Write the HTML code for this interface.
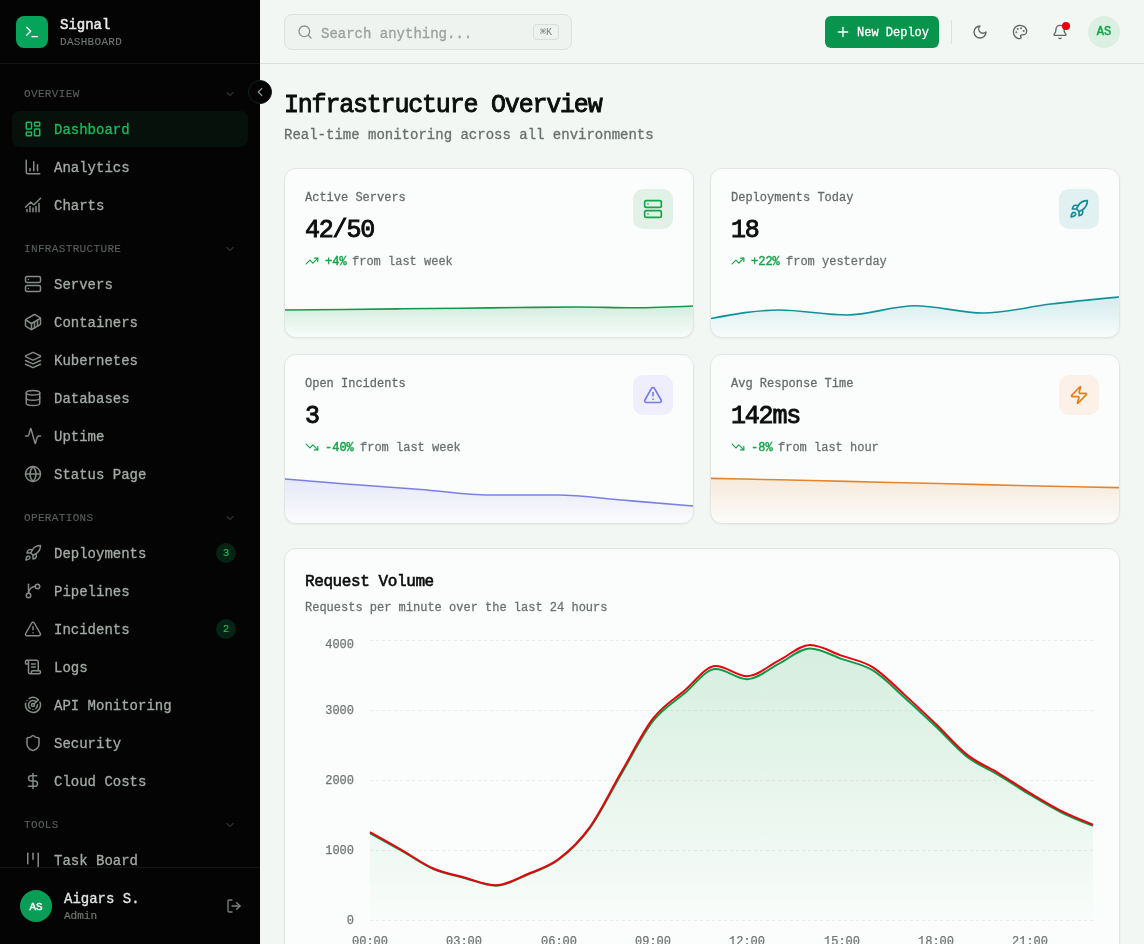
<!DOCTYPE html>
<html><head><meta charset="utf-8"><style>
html,body{margin:0;padding:0;width:1144px;height:944px;overflow:hidden;background:#f2f7f3;font-family:"Liberation Mono",monospace;}
.t{position:absolute;white-space:nowrap;will-change:transform;}
</style></head><body>
<div id="sb" style="position:absolute;left:0;top:0;width:260px;height:944px;background:#030403;overflow:hidden">
<div style="position:absolute;left:16px;top:16px;width:32px;height:32px;border-radius:8px;background:#06a35a"></div>
<svg style="position:absolute;left:24px;top:24px;" width="16" height="16" viewBox="0 0 24 24" fill="none" stroke="#ffffff" stroke-width="2" stroke-linecap="round" stroke-linejoin="round"><polyline points="4 17 10 11 4 5"/><line x1="12" x2="20" y1="19" y2="19"/></svg>
<div class="t" style="left:60px;top:18.18px;font-size:14px;line-height:14px;color:#e6e9e7;letter-spacing:0px;-webkit-text-stroke:0.50px #e6e9e7;">Signal</div>
<div class="t" style="left:60px;top:36.57px;font-size:11px;line-height:11px;color:#717773;letter-spacing:0.3px;-webkit-text-stroke:0.10px #717773;">DASHBOARD</div>
<div style="position:absolute;left:0;top:63px;width:260px;height:1px;background:#121713"></div>
<div class="t" style="left:24px;top:88.57px;font-size:11px;line-height:11px;color:#5a605c;letter-spacing:0.35px;-webkit-text-stroke:0.10px #5a605c;">OVERVIEW</div>
<svg style="position:absolute;left:224px;top:88px;" width="12" height="12" viewBox="0 0 24 24" fill="none" stroke="#4d524f" stroke-width="2" stroke-linecap="round" stroke-linejoin="round"><path d="m6 9 6 6 6-6"/></svg>
<div style="position:absolute;left:12px;top:111px;width:236px;height:36px;border-radius:8px;background:#07110b"></div>
<svg style="position:absolute;left:24px;top:120px;" width="18" height="18" viewBox="0 0 24 24" fill="none" stroke="#1db85c" stroke-width="2" stroke-linecap="round" stroke-linejoin="round"><rect width="7" height="9" x="3" y="3" rx="1"/><rect width="7" height="5" x="14" y="3" rx="1"/><rect width="7" height="9" x="14" y="12" rx="1"/><rect width="7" height="5" x="3" y="16" rx="1"/></svg>
<div class="t" style="left:54px;top:123.28px;font-size:14px;line-height:14px;color:#1db85c;letter-spacing:0px;-webkit-text-stroke:0.31px #1db85c;">Dashboard</div>
<svg style="position:absolute;left:24px;top:158px;" width="18" height="18" viewBox="0 0 24 24" fill="none" stroke="#848b86" stroke-width="2" stroke-linecap="round" stroke-linejoin="round"><path d="M3 3v16a2 2 0 0 0 2 2h16"/><path d="M18 17V9"/><path d="M13 17V5"/><path d="M8 17v-3"/></svg>
<div class="t" style="left:54px;top:161.28px;font-size:14px;line-height:14px;color:#a3aaa5;letter-spacing:0px;-webkit-text-stroke:0.31px #a3aaa5;">Analytics</div>
<svg style="position:absolute;left:24px;top:196px;" width="18" height="18" viewBox="0 0 24 24" fill="none" stroke="#848b86" stroke-width="2" stroke-linecap="round" stroke-linejoin="round"><path d="M12 16v5"/><path d="M16 14v7"/><path d="M20 10v11"/><path d="m22 3-8.646 8.646a.5.5 0 0 1-.708 0L9.354 8.354a.5.5 0 0 0-.707 0L2 15"/><path d="M4 18v3"/><path d="M8 14v7"/></svg>
<div class="t" style="left:54px;top:199.28px;font-size:14px;line-height:14px;color:#a3aaa5;letter-spacing:0px;-webkit-text-stroke:0.31px #a3aaa5;">Charts</div>
<div class="t" style="left:24px;top:243.57px;font-size:11px;line-height:11px;color:#5a605c;letter-spacing:0.35px;-webkit-text-stroke:0.10px #5a605c;">INFRASTRUCTURE</div>
<svg style="position:absolute;left:224px;top:243px;" width="12" height="12" viewBox="0 0 24 24" fill="none" stroke="#4d524f" stroke-width="2" stroke-linecap="round" stroke-linejoin="round"><path d="m6 9 6 6 6-6"/></svg>
<svg style="position:absolute;left:24px;top:275px;" width="18" height="18" viewBox="0 0 24 24" fill="none" stroke="#848b86" stroke-width="2" stroke-linecap="round" stroke-linejoin="round"><rect width="20" height="8" x="2" y="2" rx="2" ry="2"/><rect width="20" height="8" x="2" y="14" rx="2" ry="2"/><line x1="6" x2="6.01" y1="6" y2="6"/><line x1="6" x2="6.01" y1="18" y2="18"/></svg>
<div class="t" style="left:54px;top:278.28px;font-size:14px;line-height:14px;color:#a3aaa5;letter-spacing:0px;-webkit-text-stroke:0.31px #a3aaa5;">Servers</div>
<svg style="position:absolute;left:24px;top:313px;" width="18" height="18" viewBox="0 0 24 24" fill="none" stroke="#848b86" stroke-width="2" stroke-linecap="round" stroke-linejoin="round"><path d="M22 7.7c0-.6-.4-1.2-.8-1.5l-6.3-3.9a1.72 1.72 0 0 0-1.7 0l-10.3 6c-.5.2-.9.8-.9 1.4v6.6c0 .5.4 1.2.8 1.5l6.3 3.9a1.72 1.72 0 0 0 1.7 0l10.300-6c.5-.3.9-1 .9-1.5Z"/><path d="M10 21.9V14L2.1 9.1"/><path d="m10 14 11.9-6.9"/><path d="M14 19.8v-8.1"/><path d="M18 17.5V9.4"/></svg>
<div class="t" style="left:54px;top:316.28px;font-size:14px;line-height:14px;color:#a3aaa5;letter-spacing:0px;-webkit-text-stroke:0.31px #a3aaa5;">Containers</div>
<svg style="position:absolute;left:24px;top:351px;" width="18" height="18" viewBox="0 0 24 24" fill="none" stroke="#848b86" stroke-width="2" stroke-linecap="round" stroke-linejoin="round"><path d="m12.83 2.18a2 2 0 0 0-1.66 0L2.6 6.08a1 1 0 0 0 0 1.83l8.58 3.91a2 2 0 0 0 1.66 0l8.58-3.9a1 1 0 0 0 0-1.83Z"/><path d="m22 17.65-9.17 4.16a2 2 0 0 1-1.66 0L2 17.65"/><path d="m22 12.65-9.17 4.16a2 2 0 0 1-1.66 0L2 12.65"/></svg>
<div class="t" style="left:54px;top:354.28px;font-size:14px;line-height:14px;color:#a3aaa5;letter-spacing:0px;-webkit-text-stroke:0.31px #a3aaa5;">Kubernetes</div>
<svg style="position:absolute;left:24px;top:389px;" width="18" height="18" viewBox="0 0 24 24" fill="none" stroke="#848b86" stroke-width="2" stroke-linecap="round" stroke-linejoin="round"><ellipse cx="12" cy="5" rx="9" ry="3"/><path d="M3 5V19A9 3 0 0 0 21 19V5"/><path d="M3 12A9 3 0 0 0 21 12"/></svg>
<div class="t" style="left:54px;top:392.28px;font-size:14px;line-height:14px;color:#a3aaa5;letter-spacing:0px;-webkit-text-stroke:0.31px #a3aaa5;">Databases</div>
<svg style="position:absolute;left:24px;top:427px;" width="18" height="18" viewBox="0 0 24 24" fill="none" stroke="#848b86" stroke-width="2" stroke-linecap="round" stroke-linejoin="round"><path d="M22 12h-2.48a2 2 0 0 0-1.93 1.46l-2.35 8.36a.25.25 0 0 1-.48 0L9.24 2.18a.25.25 0 0 0-.48 0l-2.35 8.36A2 2 0 0 1 4.49 12H2"/></svg>
<div class="t" style="left:54px;top:430.28px;font-size:14px;line-height:14px;color:#a3aaa5;letter-spacing:0px;-webkit-text-stroke:0.31px #a3aaa5;">Uptime</div>
<svg style="position:absolute;left:24px;top:465px;" width="18" height="18" viewBox="0 0 24 24" fill="none" stroke="#848b86" stroke-width="2" stroke-linecap="round" stroke-linejoin="round"><circle cx="12" cy="12" r="10"/><path d="M12 2a14.5 14.5 0 0 0 0 20 14.5 14.5 0 0 0 0-20"/><path d="M2 12h20"/></svg>
<div class="t" style="left:54px;top:468.28px;font-size:14px;line-height:14px;color:#a3aaa5;letter-spacing:0px;-webkit-text-stroke:0.31px #a3aaa5;">Status Page</div>
<div class="t" style="left:24px;top:512.57px;font-size:11px;line-height:11px;color:#5a605c;letter-spacing:0.35px;-webkit-text-stroke:0.10px #5a605c;">OPERATIONS</div>
<svg style="position:absolute;left:224px;top:512px;" width="12" height="12" viewBox="0 0 24 24" fill="none" stroke="#4d524f" stroke-width="2" stroke-linecap="round" stroke-linejoin="round"><path d="m6 9 6 6 6-6"/></svg>
<svg style="position:absolute;left:24px;top:544px;" width="18" height="18" viewBox="0 0 24 24" fill="none" stroke="#848b86" stroke-width="2" stroke-linecap="round" stroke-linejoin="round"><path d="M4.5 16.5c-1.5 1.26-2 5-2 5s3.740-.5 5-2c.71-.84.7-2.13-.09-2.91a2.18 2.18 0 0 0-2.910-.09z"/><path d="m12 15-3-3a22 22 0 0 1 2-3.95A12.88 12.88 0 0 1 22 2c0 2.72-.78 7.5-6 11a22.35 22.35 0 0 1-4 2z"/><path d="M9 12H4s.55-3.03 2-4c1.62-1.08 5 0 5 0"/><path d="M12 15v5s3.03-.55 4-2c1.08-1.62 0-5 0-5"/></svg>
<div class="t" style="left:54px;top:547.28px;font-size:14px;line-height:14px;color:#a3aaa5;letter-spacing:0px;-webkit-text-stroke:0.31px #a3aaa5;">Deployments</div>
<div style="position:absolute;left:216px;top:543px;width:20px;height:20px;border-radius:10px;background:#052415"></div>
<div class="t" style="left:216px;top:543px;width:20px;text-align:center;font-size:11px;line-height:20px;color:#22c55e">3</div>
<svg style="position:absolute;left:24px;top:582px;" width="18" height="18" viewBox="0 0 24 24" fill="none" stroke="#848b86" stroke-width="2" stroke-linecap="round" stroke-linejoin="round"><line x1="6" x2="6" y1="3" y2="15"/><circle cx="18" cy="6" r="3"/><circle cx="6" cy="18" r="3"/><path d="M15 6a9 9 0 0 0-9 9"/></svg>
<div class="t" style="left:54px;top:585.28px;font-size:14px;line-height:14px;color:#a3aaa5;letter-spacing:0px;-webkit-text-stroke:0.31px #a3aaa5;">Pipelines</div>
<svg style="position:absolute;left:24px;top:620px;" width="18" height="18" viewBox="0 0 24 24" fill="none" stroke="#848b86" stroke-width="2" stroke-linecap="round" stroke-linejoin="round"><path d="m21.73 18-8-14a2 2 0 0 0-3.48 0l-8 14A2 2 0 0 0 4 21h16a2 2 0 0 0 1.73-3"/><path d="M12 9v4"/><path d="M12 17h.01"/></svg>
<div class="t" style="left:54px;top:623.28px;font-size:14px;line-height:14px;color:#a3aaa5;letter-spacing:0px;-webkit-text-stroke:0.31px #a3aaa5;">Incidents</div>
<div style="position:absolute;left:216px;top:619px;width:20px;height:20px;border-radius:10px;background:#052415"></div>
<div class="t" style="left:216px;top:619px;width:20px;text-align:center;font-size:11px;line-height:20px;color:#22c55e">2</div>
<svg style="position:absolute;left:24px;top:658px;" width="18" height="18" viewBox="0 0 24 24" fill="none" stroke="#848b86" stroke-width="2" stroke-linecap="round" stroke-linejoin="round"><path d="M15 12h-5"/><path d="M15 8h-5"/><path d="M19 17V5a2 2 0 0 0-2-2H4"/><path d="M8 21h12a2 2 0 0 0 2-2v-1a1 1 0 0 0-1-1H11a1 1 0 0 0-1 1v1a2 2 0 1 1-4 0V5a2 2 0 1 0-4 0v2a1 1 0 0 0 1 1h3"/></svg>
<div class="t" style="left:54px;top:661.28px;font-size:14px;line-height:14px;color:#a3aaa5;letter-spacing:0px;-webkit-text-stroke:0.31px #a3aaa5;">Logs</div>
<svg style="position:absolute;left:24px;top:696px;" width="18" height="18" viewBox="0 0 24 24" fill="none" stroke="#848b86" stroke-width="2" stroke-linecap="round" stroke-linejoin="round"><path d="M19.07 4.93A10 10 0 0 0 6.99 3.34"/><path d="M4 6h.01"/><path d="M2.29 9.62A10 10 0 1 0 21.31 8.35"/><path d="M16.24 7.76A6 6 0 1 0 8.23 16.67"/><path d="M12 18h.01"/><path d="M17.99 11.66A6 6 0 0 1 15.77 16.67"/><circle cx="12" cy="12" r="2"/><path d="m13.41 10.59 5.66-5.66"/></svg>
<div class="t" style="left:54px;top:699.28px;font-size:14px;line-height:14px;color:#a3aaa5;letter-spacing:0px;-webkit-text-stroke:0.31px #a3aaa5;">API Monitoring</div>
<svg style="position:absolute;left:24px;top:734px;" width="18" height="18" viewBox="0 0 24 24" fill="none" stroke="#848b86" stroke-width="2" stroke-linecap="round" stroke-linejoin="round"><path d="M20 13c0 5-3.5 7.5-7.66 8.95a1 1 0 0 1-.67-.01C7.5 20.5 4 18 4 13V6a1 1 0 0 1 1-1c2 0 4.5-1.2 6.24-2.72a1.17 1.17 0 0 1 1.52 0C14.51 3.810 17 5 19 5a1 1 0 0 1 1 1z"/></svg>
<div class="t" style="left:54px;top:737.28px;font-size:14px;line-height:14px;color:#a3aaa5;letter-spacing:0px;-webkit-text-stroke:0.31px #a3aaa5;">Security</div>
<svg style="position:absolute;left:24px;top:772px;" width="18" height="18" viewBox="0 0 24 24" fill="none" stroke="#848b86" stroke-width="2" stroke-linecap="round" stroke-linejoin="round"><line x1="12" x2="12" y1="2" y2="22"/><path d="M17 5H9.5a3.5 3.5 0 0 0 0 7h5a3.5 3.5 0 0 1 0 7H6"/></svg>
<div class="t" style="left:54px;top:775.28px;font-size:14px;line-height:14px;color:#a3aaa5;letter-spacing:0px;-webkit-text-stroke:0.31px #a3aaa5;">Cloud Costs</div>
<div class="t" style="left:24px;top:819.57px;font-size:11px;line-height:11px;color:#5a605c;letter-spacing:0.35px;-webkit-text-stroke:0.10px #5a605c;">TOOLS</div>
<svg style="position:absolute;left:224px;top:819px;" width="12" height="12" viewBox="0 0 24 24" fill="none" stroke="#4d524f" stroke-width="2" stroke-linecap="round" stroke-linejoin="round"><path d="m6 9 6 6 6-6"/></svg>
<svg style="position:absolute;left:24px;top:851px;" width="18" height="18" viewBox="0 0 24 24" fill="none" stroke="#848b86" stroke-width="2" stroke-linecap="round" stroke-linejoin="round"><path d="M5 3v14"/><path d="M12 3v8"/><path d="M19 3v18"/></svg>
<div class="t" style="left:54px;top:854.28px;font-size:14px;line-height:14px;color:#a3aaa5;letter-spacing:0px;-webkit-text-stroke:0.31px #a3aaa5;">Task Board</div>
<div style="position:absolute;left:0;top:867px;width:260px;height:77px;background:#030403;border-top:1px solid #121713"></div>
<div style="position:absolute;left:20px;top:890px;width:32px;height:32px;border-radius:16px;background:#0a9d55"></div>
<div class="t" style="left:20px;top:891px;width:32px;text-align:center;font-size:11px;line-height:32px;color:#fff;-webkit-text-stroke:0.45px #fff;letter-spacing:0px">AS</div>
<div class="t" style="left:64px;top:892.28px;font-size:14px;line-height:14px;color:#e3e6e4;letter-spacing:0px;-webkit-text-stroke:0.31px #e3e6e4;">Aigars S.</div>
<div class="t" style="left:64px;top:911.37px;font-size:11px;line-height:11px;color:#6f7570;letter-spacing:0px;-webkit-text-stroke:0.24px #6f7570;">Admin</div>
<svg style="position:absolute;left:226px;top:898px;" width="16" height="16" viewBox="0 0 24 24" fill="none" stroke="#7d837f" stroke-width="2" stroke-linecap="round" stroke-linejoin="round"><path d="M9 21H5a2 2 0 0 1-2-2V5a2 2 0 0 1 2-2h4"/><polyline points="16 17 21 12 16 7"/><line x1="21" x2="9" y1="12" y2="12"/></svg>
</div>
<div style="position:absolute;left:248px;top:80px;width:22px;height:22px;border-radius:12px;background:#030403;border:1px solid #16201a"></div>
<svg style="position:absolute;left:253.25px;top:85px;" width="14" height="14" viewBox="0 0 24 24" fill="none" stroke="#8a908c" stroke-width="2.2" stroke-linecap="round" stroke-linejoin="round"><path d="m15 18-6-6 6-6"/></svg>
<div style="position:absolute;left:260px;top:0;width:884px;height:63px;background:#f2f7f3;border-bottom:1px solid #dae1dc"></div>
<div style="position:absolute;left:284px;top:14px;width:286px;height:34px;border-radius:8px;background:#eef3ef;border:1px solid #dbe1dd"></div>
<svg style="position:absolute;left:297px;top:24px;" width="16" height="16" viewBox="0 0 24 24" fill="none" stroke="#8b918d" stroke-width="2" stroke-linecap="round" stroke-linejoin="round"><circle cx="11" cy="11" r="8"/><path d="m21 21-4.3-4.3"/></svg>
<div class="t" style="left:321px;top:26.58px;font-size:14px;line-height:14px;color:#9ca19e;letter-spacing:0px;-webkit-text-stroke:0.31px #9ca19e;">Search anything...</div>
<div style="position:absolute;left:533px;top:24px;width:24px;height:13.5px;border-radius:4px;background:#edf2ee;border:1px solid #d9dfdb"></div>
<div class="t" style="left:533px;top:24px;width:26px;text-align:center;font-size:10px;line-height:17px;color:#7b817d">&#8984;K</div>
<div style="position:absolute;left:825px;top:16px;width:114px;height:32px;border-radius:6px;background:#08944c"></div>
<svg style="position:absolute;left:835px;top:24px;" width="16" height="16" viewBox="0 0 24 24" fill="none" stroke="#ffffff" stroke-width="2" stroke-linecap="round" stroke-linejoin="round"><path d="M5 12h14"/><path d="M12 5v14"/></svg>
<div class="t" style="left:857px;top:26.61px;font-size:12px;line-height:12px;color:#ffffff;letter-spacing:0px;-webkit-text-stroke:0.26px #ffffff;">New Deploy</div>
<div style="position:absolute;left:951px;top:20px;width:1px;height:24px;background:#dde2df"></div>
<svg style="position:absolute;left:972px;top:24px;" width="16" height="16" viewBox="0 0 24 24" fill="none" stroke="#5f6561" stroke-width="2" stroke-linecap="round" stroke-linejoin="round"><path d="M12 3a6 6 0 0 0 9 9 9 9 0 1 1-9-9Z"/></svg>
<svg style="position:absolute;left:1012px;top:24px;" width="16" height="16" viewBox="0 0 24 24" fill="none" stroke="#5f6561" stroke-width="2" stroke-linecap="round" stroke-linejoin="round"><circle cx="13.5" cy="6.5" r=".5" fill="currentColor"/><circle cx="17.5" cy="10.5" r=".5" fill="currentColor"/><circle cx="8.5" cy="7.5" r=".5" fill="currentColor"/><circle cx="6.5" cy="12.5" r=".5" fill="currentColor"/><path d="M12 2C6.5 2 2 6.5 2 12s4.5 10 10 10c.926 0 1.648-.746 1.648-1.688 0-.437-.18-.835-.437-1.125-.29-.289-.438-.652-.438-1.125a1.640 1.640 0 0 1 1.668-1.668h1.996c3.051 0 5.555-2.503 5.555-5.554C21.965 6.012 17.461 2 12 2z"/></svg>
<svg style="position:absolute;left:1052px;top:24px;" width="16" height="16" viewBox="0 0 24 24" fill="none" stroke="#5f6561" stroke-width="2" stroke-linecap="round" stroke-linejoin="round"><path d="M10.268 21a2 2 0 0 0 3.464 0"/><path d="M3.262 15.326A1 1 0 0 0 4 17h16a1 1 0 0 0 .74-1.673C19.41 13.956 18 12.499 18 8A6 6 0 0 0 6 8c0 4.499-1.411 5.956-2.738 7.326"/></svg>
<div style="position:absolute;left:1062px;top:22px;width:8px;height:8px;border-radius:4px;background:#e5000d"></div>
<div style="position:absolute;left:1088px;top:16px;width:32px;height:32px;border-radius:16px;background:#dcefe3"></div>
<div class="t" style="left:1088px;top:16px;width:32px;text-align:center;font-size:12px;line-height:32px;color:#16a34a;-webkit-text-stroke:0.5px #16a34a;letter-spacing:0px">AS</div>
<div class="t" style="left:284px;top:92.85px;font-size:25px;line-height:25px;color:#0b0d0c;letter-spacing:-1.2px;-webkit-text-stroke:0.90px #0b0d0c;">Infrastructure Overview</div>
<div class="t" style="left:284px;top:127.78px;font-size:14px;line-height:14px;color:#6a706c;letter-spacing:0px;-webkit-text-stroke:0.31px #6a706c;">Real-time monitoring across all environments</div>
<div style="position:absolute;left:284px;top:168px;width:408px;height:168px;border:1px solid #e1e6e3;border-radius:12px;background:#fbfdfc;box-shadow:0 1px 2px rgba(0,0,0,0.05);overflow:hidden"></div>
<svg style="position:absolute;left:0;top:0" width="1144" height="944" viewBox="0 0 1144 944"><defs><linearGradient id="g284168" x1="0" y1="0" x2="0" y2="1"><stop offset="0" stop-color="#13984a" stop-opacity="0.16"/><stop offset="1" stop-color="#13984a" stop-opacity="0.01"/></linearGradient><clipPath id="cg284168"><rect x="285" y="169" width="408" height="168" rx="11"/></clipPath></defs><g clip-path="url(#cg284168)"><path d="M285.00,310.00C304.43,309.85,323.86,309.70,343.29,309.50C362.71,309.30,382.14,309.02,401.57,308.80C421.00,308.58,440.43,308.42,459.86,308.20C479.29,307.98,498.71,307.70,518.14,307.50C537.57,307.30,557.00,307.00,576.43,307.00C595.86,307.00,615.29,307.80,634.71,307.80C654.14,307.80,673.57,306.90,693.00,306.00 L693,337 L285,337 Z" fill="url(#g284168)"/><path d="M285.00,310.00C304.43,309.85,323.86,309.70,343.29,309.50C362.71,309.30,382.14,309.02,401.57,308.80C421.00,308.58,440.43,308.42,459.86,308.20C479.29,307.98,498.71,307.70,518.14,307.50C537.57,307.30,557.00,307.00,576.43,307.00C595.86,307.00,615.29,307.80,634.71,307.80C654.14,307.80,673.57,306.90,693.00,306.00" fill="none" stroke="#13984a" stroke-width="1.6"/></g></svg>
<div class="t" style="left:305px;top:191.71px;font-size:12px;line-height:12px;color:#656b67;letter-spacing:0px;-webkit-text-stroke:0.26px #656b67;">Active Servers</div>
<div class="t" style="left:304.5px;top:217.85px;font-size:25px;line-height:25px;color:#0b0d0c;letter-spacing:-1.2px;-webkit-text-stroke:0.90px #0b0d0c;">42/50</div>
<svg style="position:absolute;left:305px;top:254px;" width="14" height="14" viewBox="0 0 24 24" fill="none" stroke="#16a34a" stroke-width="2" stroke-linecap="round" stroke-linejoin="round"><polyline points="22 7 13.5 15.5 8.5 10.5 2 17"/><polyline points="16 7 22 7 22 13"/></svg>
<div class="t" style="left:325px;top:256.01px;font-size:12px;line-height:12px;color:#16a34a;letter-spacing:0px;-webkit-text-stroke:0.43px #16a34a;">+4%</div>
<div class="t" style="left:352.3px;top:256.01px;font-size:12px;line-height:12px;color:#6a706c;letter-spacing:0px;-webkit-text-stroke:0.26px #6a706c;">from last week</div>
<div style="position:absolute;left:633px;top:189px;width:40px;height:40px;border-radius:10px;background:#e2f1e7"></div>
<svg style="position:absolute;left:643px;top:199px;" width="20" height="20" viewBox="0 0 24 24" fill="none" stroke="#16a34a" stroke-width="2" stroke-linecap="round" stroke-linejoin="round"><rect width="20" height="8" x="2" y="2" rx="2" ry="2"/><rect width="20" height="8" x="2" y="14" rx="2" ry="2"/><line x1="6" x2="6.01" y1="6" y2="6"/><line x1="6" x2="6.01" y1="18" y2="18"/></svg>
<div style="position:absolute;left:710px;top:168px;width:408px;height:168px;border:1px solid #e1e6e3;border-radius:12px;background:#fbfdfc;box-shadow:0 1px 2px rgba(0,0,0,0.05);overflow:hidden"></div>
<svg style="position:absolute;left:0;top:0" width="1144" height="944" viewBox="0 0 1144 944"><defs><linearGradient id="g710168" x1="0" y1="0" x2="0" y2="1"><stop offset="0" stop-color="#11919c" stop-opacity="0.16"/><stop offset="1" stop-color="#11919c" stop-opacity="0.01"/></linearGradient><clipPath id="cg710168"><rect x="711" y="169" width="408" height="168" rx="11"/></clipPath></defs><g clip-path="url(#cg710168)"><path d="M711.00,318.50C733.67,314.25,756.33,310.00,779.00,310.00C801.67,310.00,824.33,315.00,847.00,315.00C869.67,315.00,892.33,305.70,915.00,305.70C937.67,305.70,960.33,313.00,983.00,313.00C1005.67,313.00,1028.33,306.67,1051.00,304.00C1073.67,301.33,1096.33,299.17,1119.00,297.00 L1119,337 L711,337 Z" fill="url(#g710168)"/><path d="M711.00,318.50C733.67,314.25,756.33,310.00,779.00,310.00C801.67,310.00,824.33,315.00,847.00,315.00C869.67,315.00,892.33,305.70,915.00,305.70C937.67,305.70,960.33,313.00,983.00,313.00C1005.67,313.00,1028.33,306.67,1051.00,304.00C1073.67,301.33,1096.33,299.17,1119.00,297.00" fill="none" stroke="#11919c" stroke-width="1.6"/></g></svg>
<div class="t" style="left:731px;top:191.71px;font-size:12px;line-height:12px;color:#656b67;letter-spacing:0px;-webkit-text-stroke:0.26px #656b67;">Deployments Today</div>
<div class="t" style="left:730.5px;top:217.85px;font-size:25px;line-height:25px;color:#0b0d0c;letter-spacing:-1.2px;-webkit-text-stroke:0.90px #0b0d0c;">18</div>
<svg style="position:absolute;left:731px;top:254px;" width="14" height="14" viewBox="0 0 24 24" fill="none" stroke="#16a34a" stroke-width="2" stroke-linecap="round" stroke-linejoin="round"><polyline points="22 7 13.5 15.5 8.5 10.5 2 17"/><polyline points="16 7 22 7 22 13"/></svg>
<div class="t" style="left:751px;top:256.01px;font-size:12px;line-height:12px;color:#16a34a;letter-spacing:0px;-webkit-text-stroke:0.43px #16a34a;">+22%</div>
<div class="t" style="left:785.5px;top:256.01px;font-size:12px;line-height:12px;color:#6a706c;letter-spacing:0px;-webkit-text-stroke:0.26px #6a706c;">from yesterday</div>
<div style="position:absolute;left:1059px;top:189px;width:40px;height:40px;border-radius:10px;background:#e1f0f1"></div>
<svg style="position:absolute;left:1069px;top:199px;" width="20" height="20" viewBox="0 0 24 24" fill="none" stroke="#0f8c98" stroke-width="2" stroke-linecap="round" stroke-linejoin="round"><path d="M4.5 16.5c-1.5 1.26-2 5-2 5s3.740-.5 5-2c.71-.84.7-2.13-.09-2.91a2.18 2.18 0 0 0-2.910-.09z"/><path d="m12 15-3-3a22 22 0 0 1 2-3.95A12.88 12.88 0 0 1 22 2c0 2.72-.78 7.5-6 11a22.35 22.35 0 0 1-4 2z"/><path d="M9 12H4s.55-3.03 2-4c1.62-1.08 5 0 5 0"/><path d="M12 15v5s3.03-.55 4-2c1.08-1.62 0-5 0-5"/></svg>
<div style="position:absolute;left:284px;top:354px;width:408px;height:168px;border:1px solid #e1e6e3;border-radius:12px;background:#fbfdfc;box-shadow:0 1px 2px rgba(0,0,0,0.05);overflow:hidden"></div>
<svg style="position:absolute;left:0;top:0" width="1144" height="944" viewBox="0 0 1144 944"><defs><linearGradient id="g284354" x1="0" y1="0" x2="0" y2="1"><stop offset="0" stop-color="#7a7fe8" stop-opacity="0.16"/><stop offset="1" stop-color="#7a7fe8" stop-opacity="0.01"/></linearGradient><clipPath id="cg284354"><rect x="285" y="355" width="408" height="168" rx="11"/></clipPath></defs><g clip-path="url(#cg284354)"><path d="M285.00,479.00C307.67,480.88,330.33,482.75,353.00,484.50C375.67,486.25,398.33,487.75,421.00,489.50C443.67,491.25,466.33,495.00,489.00,495.00C511.67,495.00,534.33,495.00,557.00,495.00C579.67,495.00,602.33,498.47,625.00,500.30C647.67,502.13,670.33,504.07,693.00,506.00 L693,523 L285,523 Z" fill="url(#g284354)"/><path d="M285.00,479.00C307.67,480.88,330.33,482.75,353.00,484.50C375.67,486.25,398.33,487.75,421.00,489.50C443.67,491.25,466.33,495.00,489.00,495.00C511.67,495.00,534.33,495.00,557.00,495.00C579.67,495.00,602.33,498.47,625.00,500.30C647.67,502.13,670.33,504.07,693.00,506.00" fill="none" stroke="#7a7fe8" stroke-width="1.6"/></g></svg>
<div class="t" style="left:305px;top:377.71px;font-size:12px;line-height:12px;color:#656b67;letter-spacing:0px;-webkit-text-stroke:0.26px #656b67;">Open Incidents</div>
<div class="t" style="left:304.5px;top:403.85px;font-size:25px;line-height:25px;color:#0b0d0c;letter-spacing:-1.2px;-webkit-text-stroke:0.90px #0b0d0c;">3</div>
<svg style="position:absolute;left:305px;top:440px;" width="14" height="14" viewBox="0 0 24 24" fill="none" stroke="#16a34a" stroke-width="2" stroke-linecap="round" stroke-linejoin="round"><polyline points="22 17 13.5 8.5 8.5 13.5 2 7"/><polyline points="16 17 22 17 22 11"/></svg>
<div class="t" style="left:325px;top:442.01px;font-size:12px;line-height:12px;color:#16a34a;letter-spacing:0px;-webkit-text-stroke:0.43px #16a34a;">-40%</div>
<div class="t" style="left:359.5px;top:442.01px;font-size:12px;line-height:12px;color:#6a706c;letter-spacing:0px;-webkit-text-stroke:0.26px #6a706c;">from last week</div>
<div style="position:absolute;left:633px;top:375px;width:40px;height:40px;border-radius:10px;background:#eeeefc"></div>
<svg style="position:absolute;left:643px;top:385px;" width="20" height="20" viewBox="0 0 24 24" fill="none" stroke="#777be8" stroke-width="2" stroke-linecap="round" stroke-linejoin="round"><path d="m21.73 18-8-14a2 2 0 0 0-3.48 0l-8 14A2 2 0 0 0 4 21h16a2 2 0 0 0 1.73-3"/><path d="M12 9v4"/><path d="M12 17h.01"/></svg>
<div style="position:absolute;left:710px;top:354px;width:408px;height:168px;border:1px solid #e1e6e3;border-radius:12px;background:#fbfdfc;box-shadow:0 1px 2px rgba(0,0,0,0.05);overflow:hidden"></div>
<svg style="position:absolute;left:0;top:0" width="1144" height="944" viewBox="0 0 1144 944"><defs><linearGradient id="g710354" x1="0" y1="0" x2="0" y2="1"><stop offset="0" stop-color="#e5842a" stop-opacity="0.16"/><stop offset="1" stop-color="#e5842a" stop-opacity="0.01"/></linearGradient><clipPath id="cg710354"><rect x="711" y="355" width="408" height="168" rx="11"/></clipPath></defs><g clip-path="url(#cg710354)"><path d="M711.00,478.40C733.67,478.85,756.33,479.30,779.00,479.80C801.67,480.30,824.33,480.87,847.00,481.40C869.67,481.93,892.33,482.47,915.00,483.00C937.67,483.53,960.33,484.07,983.00,484.60C1005.67,485.13,1028.33,485.70,1051.00,486.20C1073.67,486.70,1096.33,487.15,1119.00,487.60 L1119,523 L711,523 Z" fill="url(#g710354)"/><path d="M711.00,478.40C733.67,478.85,756.33,479.30,779.00,479.80C801.67,480.30,824.33,480.87,847.00,481.40C869.67,481.93,892.33,482.47,915.00,483.00C937.67,483.53,960.33,484.07,983.00,484.60C1005.67,485.13,1028.33,485.70,1051.00,486.20C1073.67,486.70,1096.33,487.15,1119.00,487.60" fill="none" stroke="#e5842a" stroke-width="1.6"/></g></svg>
<div class="t" style="left:731px;top:377.71px;font-size:12px;line-height:12px;color:#656b67;letter-spacing:0px;-webkit-text-stroke:0.26px #656b67;">Avg Response Time</div>
<div class="t" style="left:730.5px;top:403.85px;font-size:25px;line-height:25px;color:#0b0d0c;letter-spacing:-1.2px;-webkit-text-stroke:0.90px #0b0d0c;">142ms</div>
<svg style="position:absolute;left:731px;top:440px;" width="14" height="14" viewBox="0 0 24 24" fill="none" stroke="#16a34a" stroke-width="2" stroke-linecap="round" stroke-linejoin="round"><polyline points="22 17 13.5 8.5 8.5 13.5 2 7"/><polyline points="16 17 22 17 22 11"/></svg>
<div class="t" style="left:751px;top:442.01px;font-size:12px;line-height:12px;color:#16a34a;letter-spacing:0px;-webkit-text-stroke:0.43px #16a34a;">-8%</div>
<div class="t" style="left:778.3px;top:442.01px;font-size:12px;line-height:12px;color:#6a706c;letter-spacing:0px;-webkit-text-stroke:0.26px #6a706c;">from last hour</div>
<div style="position:absolute;left:1059px;top:375px;width:40px;height:40px;border-radius:10px;background:#fcf1e8"></div>
<svg style="position:absolute;left:1069px;top:385px;" width="20" height="20" viewBox="0 0 24 24" fill="none" stroke="#e5801a" stroke-width="2" stroke-linecap="round" stroke-linejoin="round"><path d="M4 14a1 1 0 0 1-.78-1.63l9.9-10.2a.5.5 0 0 1 .86.46l-1.92 6.02A1 1 0 0 0 13 10h7a1 1 0 0 1 .78 1.63l-9.9 10.2a.5.5 0 0 1-.86-.46l1.92-6.02A1 1 0 0 0 11 14z"/></svg>
<div style="position:absolute;left:284px;top:548px;width:834px;height:420px;border:1px solid #e1e6e3;border-radius:12px;background:#fbfdfc;box-shadow:0 1px 2px rgba(0,0,0,0.05)"></div>
<div class="t" style="left:305px;top:573.84px;font-size:16px;line-height:16px;color:#0b0d0c;letter-spacing:-0.4px;-webkit-text-stroke:0.58px #0b0d0c;">Request Volume</div>
<div class="t" style="left:305px;top:601.61px;font-size:12px;line-height:12px;color:#6a706c;letter-spacing:0px;-webkit-text-stroke:0.26px #6a706c;">Requests per minute over the last 24 hours</div>
<svg style="position:absolute;left:0;top:0" width="1144" height="944" viewBox="0 0 1144 944"><defs><linearGradient id="ag" x1="0" y1="0" x2="0" y2="1"><stop offset="0" stop-color="#16a34a" stop-opacity="0.16"/><stop offset="1" stop-color="#16a34a" stop-opacity="0.01"/></linearGradient></defs><line x1="370" x2="1094" y1="920.5" y2="920.5" stroke="#e9ecea" stroke-dasharray="3 3"/><line x1="370" x2="1094" y1="850.5" y2="850.5" stroke="#e9ecea" stroke-dasharray="3 3"/><line x1="370" x2="1094" y1="780.5" y2="780.5" stroke="#e9ecea" stroke-dasharray="3 3"/><line x1="370" x2="1094" y1="710.5" y2="710.5" stroke="#e9ecea" stroke-dasharray="3 3"/><line x1="370" x2="1094" y1="640.5" y2="640.5" stroke="#e9ecea" stroke-dasharray="3 3"/><path d="M370.00,833.20C380.48,838.98,390.96,844.75,401.43,850.70C411.91,856.65,422.39,864.35,432.87,868.90C443.35,873.45,453.83,875.20,464.30,878.00C474.78,880.80,485.26,885.70,495.74,885.70C506.22,885.70,516.70,879.17,527.17,874.85C537.65,870.53,548.13,867.62,558.61,859.80C569.09,851.98,579.57,842.30,590.04,827.95C600.52,813.60,611.00,791.49,621.48,773.70C631.96,755.91,642.43,734.56,652.91,721.20C663.39,707.84,673.87,702.24,684.35,693.55C694.83,684.86,705.30,669.05,715.78,669.05C726.26,669.05,736.74,679.20,747.22,679.20C757.70,679.20,768.17,668.93,778.65,663.80C789.13,658.67,799.61,648.40,810.09,648.40C820.57,648.40,831.04,655.23,841.52,658.90C852.00,662.58,862.48,664.03,872.96,670.45C883.43,676.87,893.91,688.07,904.39,697.40C914.87,706.73,925.35,716.53,935.83,726.45C946.30,736.37,956.78,748.79,967.26,756.90C977.74,765.01,988.22,768.80,998.70,775.10C1009.17,781.40,1019.65,788.47,1030.13,794.70C1040.61,800.93,1051.09,807.30,1061.57,812.48C1072.04,817.66,1082.52,821.72,1093.00,825.78 L1093.0,920 L370,920 Z" fill="url(#ag)"/><path d="M370.00,833.20C380.48,838.98,390.96,844.75,401.43,850.70C411.91,856.65,422.39,864.35,432.87,868.90C443.35,873.45,453.83,875.20,464.30,878.00C474.78,880.80,485.26,885.70,495.74,885.70C506.22,885.70,516.70,879.17,527.17,874.85C537.65,870.53,548.13,867.62,558.61,859.80C569.09,851.98,579.57,842.30,590.04,827.95C600.52,813.60,611.00,791.49,621.48,773.70C631.96,755.91,642.43,734.56,652.91,721.20C663.39,707.84,673.87,702.24,684.35,693.55C694.83,684.86,705.30,669.05,715.78,669.05C726.26,669.05,736.74,679.20,747.22,679.20C757.70,679.20,768.17,668.93,778.65,663.80C789.13,658.67,799.61,648.40,810.09,648.40C820.57,648.40,831.04,655.23,841.52,658.90C852.00,662.58,862.48,664.03,872.96,670.45C883.43,676.87,893.91,688.07,904.39,697.40C914.87,706.73,925.35,716.53,935.83,726.45C946.30,736.37,956.78,748.79,967.26,756.90C977.74,765.01,988.22,768.80,998.70,775.10C1009.17,781.40,1019.65,788.47,1030.13,794.70C1040.61,800.93,1051.09,807.30,1061.57,812.48C1072.04,817.66,1082.52,821.72,1093.00,825.78" fill="none" stroke="#109848" stroke-width="2"/><path d="M370.00,832.12C380.48,837.96,390.96,843.81,401.43,849.83C411.91,855.86,422.39,863.65,432.87,868.26C443.35,872.87,453.83,874.64,464.30,877.48C474.78,880.31,485.26,885.27,495.74,885.27C506.22,885.27,516.70,878.66,527.17,874.29C537.65,869.91,548.13,866.96,558.61,859.05C569.09,851.13,579.57,841.33,590.04,826.80C600.52,812.27,611.00,789.89,621.48,771.87C631.96,753.86,642.43,732.24,652.91,718.71C663.39,705.19,673.87,699.52,684.35,690.72C694.83,681.92,705.30,665.91,715.78,665.91C726.26,665.91,736.74,676.19,747.22,676.19C757.70,676.19,768.17,665.79,778.65,660.60C789.13,655.40,799.61,645.00,810.09,645.00C820.57,645.00,831.04,651.92,841.52,655.64C852.00,659.36,862.48,660.83,872.96,667.33C883.43,673.83,893.91,685.17,904.39,694.62C914.87,704.07,925.35,713.99,935.83,724.03C946.30,734.07,956.78,746.65,967.26,754.86C977.74,763.07,988.22,766.91,998.70,773.29C1009.17,779.67,1019.65,786.83,1030.13,793.13C1040.61,799.44,1051.09,805.89,1061.57,811.14C1072.04,816.38,1082.52,820.49,1093.00,824.60" fill="none" stroke="#e7000b" stroke-width="2"/></svg>
<div class="t" style="left:300px;top:914.81px;width:54px;text-align:right;font-size:12px;line-height:12px;color:#6f7571;-webkit-text-stroke:0.25px #6f7571">0</div>
<div class="t" style="left:300px;top:844.81px;width:54px;text-align:right;font-size:12px;line-height:12px;color:#6f7571;-webkit-text-stroke:0.25px #6f7571">1000</div>
<div class="t" style="left:300px;top:774.81px;width:54px;text-align:right;font-size:12px;line-height:12px;color:#6f7571;-webkit-text-stroke:0.25px #6f7571">2000</div>
<div class="t" style="left:300px;top:704.81px;width:54px;text-align:right;font-size:12px;line-height:12px;color:#6f7571;-webkit-text-stroke:0.25px #6f7571">3000</div>
<div class="t" style="left:300px;top:638.81px;width:54px;text-align:right;font-size:12px;line-height:12px;color:#6f7571;-webkit-text-stroke:0.25px #6f7571">4000</div>
<div class="t" style="left:340.00px;top:936.01px;width:60px;text-align:center;font-size:12px;line-height:12px;color:#6f7571;-webkit-text-stroke:0.25px #6f7571">00:00</div>
<div class="t" style="left:434.30px;top:936.01px;width:60px;text-align:center;font-size:12px;line-height:12px;color:#6f7571;-webkit-text-stroke:0.25px #6f7571">03:00</div>
<div class="t" style="left:528.61px;top:936.01px;width:60px;text-align:center;font-size:12px;line-height:12px;color:#6f7571;-webkit-text-stroke:0.25px #6f7571">06:00</div>
<div class="t" style="left:622.91px;top:936.01px;width:60px;text-align:center;font-size:12px;line-height:12px;color:#6f7571;-webkit-text-stroke:0.25px #6f7571">09:00</div>
<div class="t" style="left:717.22px;top:936.01px;width:60px;text-align:center;font-size:12px;line-height:12px;color:#6f7571;-webkit-text-stroke:0.25px #6f7571">12:00</div>
<div class="t" style="left:811.52px;top:936.01px;width:60px;text-align:center;font-size:12px;line-height:12px;color:#6f7571;-webkit-text-stroke:0.25px #6f7571">15:00</div>
<div class="t" style="left:905.83px;top:936.01px;width:60px;text-align:center;font-size:12px;line-height:12px;color:#6f7571;-webkit-text-stroke:0.25px #6f7571">18:00</div>
<div class="t" style="left:1000.13px;top:936.01px;width:60px;text-align:center;font-size:12px;line-height:12px;color:#6f7571;-webkit-text-stroke:0.25px #6f7571">21:00</div>
</body></html>
